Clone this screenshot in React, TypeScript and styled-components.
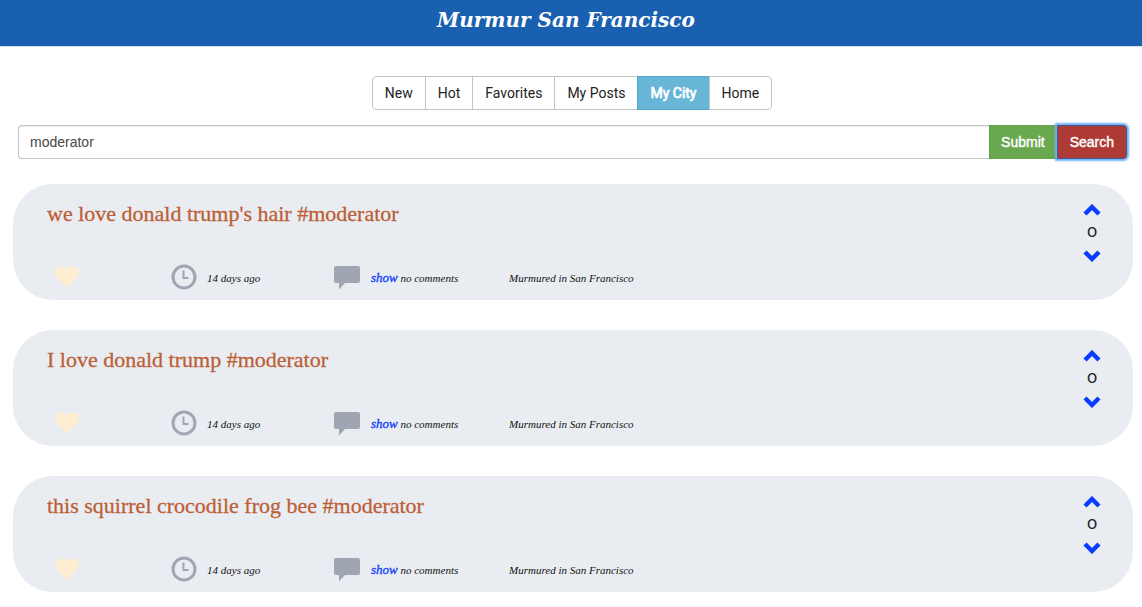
import React, { useState } from "react";
import styled, { createGlobalStyle, css } from "styled-components";

const GlobalStyle = createGlobalStyle`
  *, *::before, *::after { box-sizing: border-box; }
  body {
    margin: 0;
    background: #fff;
    color: #333;
    font: 14px/20px Roboto, "Liberation Sans", sans-serif;
  }
`;

const Header = styled.header`
  height: 47px;
  padding: 8px 10px 0 0;
  background: #1a60b0;
  border-bottom: 1px solid #d9dde6;
`;

const Brand = styled.h1`
  margin: 0;
  color: #fff;
  font: italic bold 20px/24px "DejaVu Serif", serif;
  text-align: center;
`;

const Tabs = styled.nav`
  display: flex;
  justify-content: center;
  padding: 29px 0 15px 2px;
`;

const Tab = styled.button<{ $active?: boolean }>`
  height: 34px;
  padding: 0 12px;
  border: 1px solid #c4c4c4;
  background: #fff;
  color: #222;
  font: 14px/20px Roboto, sans-serif;
  & + & { margin-left: -1px; }
  &:first-child { border-radius: 4px 0 0 4px; }
  &:last-child { border-radius: 0 4px 4px 0; }
  ${(p) =>
    p.$active &&
    css`
      background: #68b6d7;
      border-color: #50aace;
      color: #fff;
      -webkit-text-stroke: 0.7px #fff;
    `}
`;

const SearchForm = styled.form`
  display: flex;
  padding: 0 15px 0 18px;
`;

const SearchInput = styled.input`
  flex: 1;
  min-width: 0;
  height: 34px;
  padding: 0 11px;
  border: 1px solid #c4c4c4;
  border-right: 0;
  border-radius: 4px 0 0 4px;
  box-shadow: inset 0 1px 1px rgba(0, 0, 0, 0.08);
  color: #484848;
  font: 14px/20px "Liberation Sans", sans-serif;
  outline: none;
`;

const FormButton = styled.button<{ $kind: "submit" | "search" }>`
  height: 34px;
  padding: 0 11px;
  border: 1px solid #63a249;
  background: #6aa84f;
  color: #fff;
  font: 14px/20px "Liberation Sans", sans-serif;
  -webkit-text-stroke: 0.4px #fff;
  ${(p) =>
    p.$kind === "search" &&
    css`
      padding: 0 12px;
      border-color: #3f5b9d;
      border-radius: 0 4px 4px 0;
      background: #ae3a35;
      box-shadow: 0 0 2px 2px #74b0f4;
    `}
`;

const Feed = styled.main`
  display: flex;
  flex-direction: column;
  gap: 30px;
  padding: 25px 9px 15px 13px;
`;

const Card = styled.article`
  display: flex;
  justify-content: space-between;
  height: 116px;
  padding: 16px 32px 8px 34px;
  border-radius: 40px;
  background: #e9edf2;
`;

const Body = styled.div`
  display: flex;
  flex-direction: column;
  justify-content: space-between;
`;

const Title = styled.h2`
  margin: 0;
  color: #bd5f36;
  font: 22px/28px "Liberation Serif", serif;
  -webkit-text-stroke: 0.3px #bd5f36;
`;

const Meta = styled.div`
  display: grid;
  grid-template-columns: 124px 162px 176px auto;
  align-items: center;
  height: 30px;
  color: #111;
  font: italic 11px/16px "Liberation Serif", serif;
`;

const MetaItem = styled.div`
  display: flex;
  align-items: center;
  gap: 10px;
  white-space: nowrap;
`;

const MetaText = styled.span`
  padding-top: 2px;
`;

const IconButton = styled.button`
  display: flex;
  padding: 0;
  border: 0;
  background: none;
  cursor: pointer;
`;

const HeartButton = styled(IconButton)`
  margin-left: 8px;
`;

const ShowLink = styled.a`
  color: #0a3cff;
  font-size: 13px;
  text-decoration: none;
  -webkit-text-stroke: 0.3px #0a3cff;
`;

const Votes = styled.div`
  display: flex;
  flex-direction: column;
  align-items: center;
  padding-top: 4px;
`;

const Score = styled.span`
  margin: 3px 0 9px;
  color: #222;
  font: 18px/22px Lato, "Open Sans", sans-serif;
  font-variant-numeric: oldstyle-nums;
`;

const Heart = () => (
  <svg width="24" height="22" viewBox="0 0 24 22" aria-hidden="true">
    <path
      d="M12 22C10.500 19.500 7.500 16.800 3.600 13.200C1.200 11 0 9 0 6.500C0 3 2.700 .5 6 .5C8.600 .5 11 1.200 12 2.600C13 1.200 15.400 .5 18 .5C21.300 .5 24 3 24 6.500C24 9 22.800 11 20.400 13.200C16.500 16.800 13.500 19.500 12 22Z"
      fill="#feedd0"
    />
  </svg>
);

const Clock = () => (
  <svg width="26" height="26" viewBox="0 0 26 26" fill="none" stroke="#9fa6b1" aria-hidden="true">
    <circle cx="13" cy="13" r="11" strokeWidth="3" />
    <path d="M12.500 6.500V14H17.500" strokeWidth="2" />
  </svg>
);

const Bubble = () => (
  <svg width="28" height="26" viewBox="0 0 28 26" aria-hidden="true">
    <path d="M3 2H25Q27 2 27 4V17Q27 19 25 19H12L6 25.500V19H3Q1 19 1 17V4Q1 2 3 2Z" fill="#9fa6b1" />
  </svg>
);

const Chevron = ({ down }: { down?: boolean }) => (
  <svg width="18" height="12" viewBox="0 0 18 12" fill="none" stroke="#0a3cff" strokeWidth="4.400" aria-hidden="true">
    <path d={down ? "M2 2L9 9L16 2" : "M2 10L9 3L16 10"} />
  </svg>
);

const tabs = ["New", "Hot", "Favorites", "My Posts", "My City", "Home"];

const posts = [
  "we love donald trump's hair #moderator",
  "I love donald trump #moderator",
  "this squirrel crocodile frog bee #moderator",
];

const Post = ({ title }: { title: string }) => (
  <Card>
    <Body>
      <Title>{title}</Title>
      <Meta>
        <HeartButton type="button" aria-label="Favorite">
          <Heart />
        </HeartButton>
        <MetaItem>
          <Clock />
          <MetaText>14 days ago</MetaText>
        </MetaItem>
        <MetaItem>
          <Bubble />
          <MetaText>
            <ShowLink href="#comments">show</ShowLink> no comments
          </MetaText>
        </MetaItem>
        <MetaItem>
          <MetaText>Murmured in San Francisco</MetaText>
        </MetaItem>
      </Meta>
    </Body>
    <Votes>
      <IconButton type="button" aria-label="Vote up">
        <Chevron />
      </IconButton>
      <Score>0</Score>
      <IconButton type="button" aria-label="Vote down">
        <Chevron down />
      </IconButton>
    </Votes>
  </Card>
);

export default function App() {
  const [active, setActive] = useState("My City");
  const [query, setQuery] = useState("moderator");
  return (
    <>
      <GlobalStyle />
      <Header>
        <Brand>Murmur San Francisco</Brand>
      </Header>
      <Tabs>
        {tabs.map((t) => (
          <Tab key={t} type="button" $active={t === active} onClick={() => setActive(t)}>
            {t}
          </Tab>
        ))}
      </Tabs>
      <SearchForm onSubmit={(e) => e.preventDefault()}>
        <SearchInput aria-label="Murmur text" value={query} onChange={(e) => setQuery(e.target.value)} />
        <FormButton type="submit" $kind="submit">Submit</FormButton>
        <FormButton type="button" $kind="search">Search</FormButton>
      </SearchForm>
      <Feed>
        {posts.map((p) => (
          <Post key={p} title={p} />
        ))}
      </Feed>
    </>
  );
}
